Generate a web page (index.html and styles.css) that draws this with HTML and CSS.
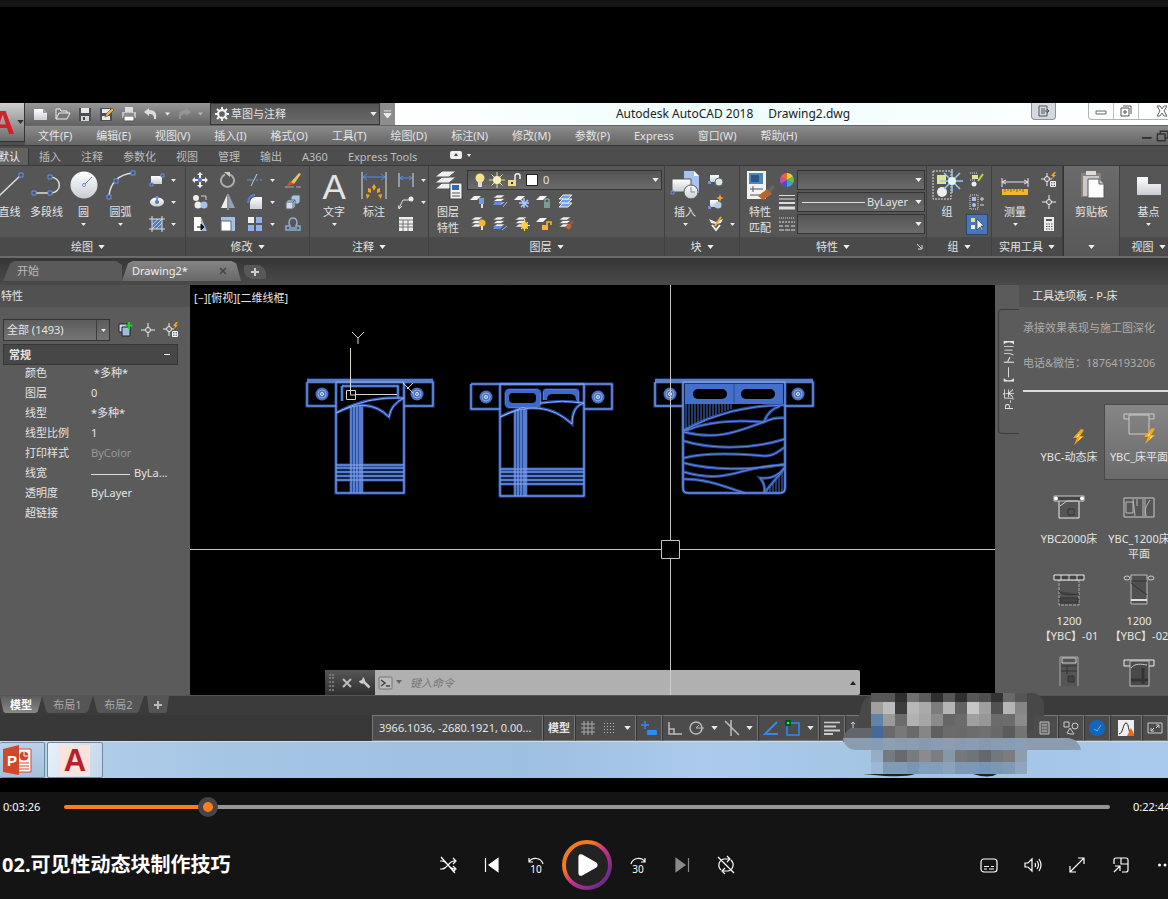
FILE: index.html
```html
<!DOCTYPE html>
<html lang="zh-CN">
<head>
  <meta charset="UTF-8">
  <title>02.可见性动态块制作技巧</title>
  <link rel="stylesheet" href="styles.css">
</head>
<body>

  <!-- shared icon shapes -->
  <svg class="defs" aria-hidden="true">
    <defs>
      <linearGradient id="paper" x1="0" y1="0" x2="0" y2="1"><stop offset="0" stop-color="#fff"/><stop offset="1" stop-color="#c9cdd3"/></linearGradient>
      <linearGradient id="ring" x1="0" y1="0" x2="1" y2="1"><stop offset="0.3" stop-color="#f07a22"/><stop offset="0.52" stop-color="#c9308c"/><stop offset="0.85" stop-color="#6d2c86"/></linearGradient>
      <symbol id="caret" viewBox="0 0 8 5"><path d="M0 0h8L4 5z" fill="#eee"/></symbol>
      <symbol id="stack" viewBox="0 0 16 16"><g fill="#f4f4f4" stroke="#555" stroke-width=".6"><path d="M1 12l4-3h8l-4 3z"/><path d="M1 8.500l4-3h8l-4 3z"/><path d="M1 5l4-3h8L9 5z"/></g></symbol>
      <symbol id="sheet" viewBox="0 0 16 16"><path d="M0 7l4-4h7L7 7z" fill="#f4f4f4"/></symbol>
      <symbol id="lamp" viewBox="-8 -8 16 16"><circle r="6.500" fill="#4a72c4"/><circle r="4" fill="none" stroke="#8fa9de"/><circle r="1.500" fill="#4a72c4" stroke="#e6ecff"/></symbol>
      <symbol id="bolt" viewBox="0 0 14 16"><path d="M9 0L1 9h4l-3 7 10-9H8l4-6z" fill="#f7a51c"/><path d="M8 4L4 8h4l-2 4 4-4H6z" fill="#fff3b0"/></symbol>
      <symbol id="cross" viewBox="0 0 16 16"><path d="M8 1v14M1 8h14" stroke="#eee"/><circle cx="8" cy="8" r="2.500" fill="#666" stroke="#eee"/></symbol>
      <symbol id="crossbolt" viewBox="0 0 16 16"><path d="M6 1v13M0 7h11" stroke="#eee"/><circle cx="6" cy="7" r="2.500" fill="#666" stroke="#eee"/><path d="M13 0l-3 4h2l-1 3 4-4h-2l2-3z" fill="#f7a51c"/><path d="M9.500 9.500h5v5h-5zM12 9.500v5M9.500 12h5" fill="#777" stroke="#fff"/></symbol>
    </defs>
  </svg>

  <div class="letterbox"></div>

  <div class="cad">
    <header class="head">
      <button class="app-menu" aria-label="应用程序"><b>A</b><svg class="caret"><use href="#caret"/></svg></button>
      <div class="head-rows">
        <div class="titlebar">
          <div class="quick">
            <button aria-label="新建"><svg viewBox="0 0 16 16"><path d="M1 3h9l4 4v7H1z" fill="url(#paper)"/><path d="M10 3v4h4z" fill="#999"/></svg></button>
            <button aria-label="打开"><svg viewBox="0 0 16 16"><path d="M1 13V3h4l1 2h6v2M1 13L4 7h11l-3 6z" fill="#777" stroke="#eee"/></svg></button>
            <button aria-label="保存"><svg viewBox="0 0 16 16"><path d="M2 2h12v13H2z" fill="#4b4f55"/><path d="M4 2h8v5H4z" fill="#e8e8e8"/><path d="M4 10h8v5H4z" fill="#cfd6de"/><path d="M6 11h2v3H6z" fill="#444"/></svg></button>
            <button aria-label="另存为"><svg viewBox="0 0 16 16"><path d="M1 2h12v13H1z" fill="#4b4f55"/><path d="M3 3h8v4H3zM3 10h8v4H3z" fill="#e8e8e8"/><path d="M6 11l1-3 6-6 2 2-6 6z" fill="#f0b040" stroke="#333" stroke-width=".5"/></svg></button>
            <button aria-label="打印"><svg viewBox="0 0 16 16"><path d="M4 1h8v5H4z" fill="#ddd"/><path d="M1 6h14v6H1z" fill="#c4c4c4"/><path d="M3 10h10v5H3z" fill="#fff" stroke="#555"/><path d="M3 8h10" stroke="#555"/></svg></button>
            <button aria-label="放弃"><svg viewBox="0 0 16 16"><path d="M6 2L1 6l5 4V8c4 0 5 1 5 5h2c1-6-1-9-7-9z" fill="#ddd"/></svg></button>
            <svg class="caret"><use href="#caret"/></svg>
            <button class="dim" aria-label="重做"><svg viewBox="0 0 16 16"><path d="M10 2l5 4-5 4V8c-4 0-5 1-5 5H3C2 7 4 4 10 4z" fill="#aaa"/></svg></button>
            <svg class="caret dim"><use href="#caret"/></svg>
          </div>
          <label class="combo workspace">
            <svg class="i14" viewBox="0 0 16 16"><circle cx="8" cy="8" r="4.500" fill="none" stroke="#f2f2f2" stroke-width="2.500"/><path d="M8 0v3M8 13v3M0 8h3M13 8h3M2.300 2.300l2 2M11.700 11.700l2 2M13.700 2.300l-2 2M4.300 11.700l-2 2" stroke="#f2f2f2" stroke-width="2.200"/></svg>
            <select aria-label="工作空间"><option>草图与注释</option></select>
            <svg class="caret"><use href="#caret"/></svg>
          </label>
          <button class="quick-more" aria-label="自定义"><svg viewBox="0 0 10 10"><path d="M1 1h8M1 4h8L5 9z" fill="#eee" stroke="#eee"/></svg></button>
          <div class="caption"><span>Autodesk AutoCAD 2018</span><span>Drawing2.dwg</span></div>
          <button class="float-btn" aria-label="停靠"><svg viewBox="0 0 12 12"><path d="M1 1h8v10H1zM3 4h4M3 6h7M3 8h4M9 4l2 2-2 2" fill="none" stroke="#555"/></svg></button>
          <div class="win">
            <button aria-label="最小化"><svg viewBox="0 0 12 12"><path d="M1 6h10v3H1z" fill="#fff" stroke="#666"/></svg></button>
            <button aria-label="还原"><svg viewBox="0 0 12 12"><path d="M3 1h8v8M1 3h8v8H1zM4 6h2v2H4z" fill="none" stroke="#555"/></svg></button>
            <button class="win-close" aria-label="关闭"><svg viewBox="0 0 12 12"><path d="M1 1h3l2 3 2-3h3L8 6l3 5H8L6 8l-2 3H1l3-5z" fill="#fff" stroke="#666"/></svg></button>
          </div>
        </div>
        <nav class="menubar">
          <button>文件(F)</button><button>编辑(E)</button><button>视图(V)</button><button>插入(I)</button><button>格式(O)</button><button>工具(T)</button><button>绘图(D)</button><button>标注(N)</button><button>修改(M)</button><button>参数(P)</button><button>Express</button><button>窗口(W)</button><button>帮助(H)</button>
          <svg class="mdi" viewBox="0 0 28 12"><path d="M1 8h10" stroke="#333" stroke-width="2"/><path d="M20 4V1h8v7h-3M17 4h8v7h-8z" fill="none" stroke="#333" stroke-width="1.500"/></svg>
        </nav>
      </div>
    </header>

    <nav class="ribbon-tabs">
      <button class="on">默认</button><button>插入</button><button>注释</button><button>参数化</button><button>视图</button><button>管理</button><button>输出</button><button>A360</button><button>Express Tools</button>
      <svg class="fold" viewBox="0 0 22 10"><rect y="1" width="12" height="8" rx="2" fill="#eee"/><path d="M4 6h4L6 3z" fill="#444"/><path d="M17 4h4l-2 3z" fill="#eee"/></svg>
    </nav>

    <div class="ribbon">
      <section class="panel draw">
        <div class="tools">
          <button class="big"><svg viewBox="0 0 32 32"><path d="M4 28L27 6" stroke="#ddd" stroke-width="1.500"/><path d="M25 4h4v4h-4z" fill="#456" stroke="#6f8fe8"/></svg><span>直线</span></button>
          <button class="big"><svg viewBox="0 0 32 32"><path d="M4 24h15c13 0 12-16 0-16" fill="none" stroke="#ddd" stroke-width="1.500"/><path d="M1 22h4v4H1zM17 22h4v4h-4zM17 6h4v4h-4z" fill="#456" stroke="#6f8fe8"/></svg><span>多段线</span></button>
          <button class="big"><svg viewBox="0 0 32 32"><circle cx="16" cy="16" r="13.500" fill="url(#paper)"/><path d="M16 16l8-8" stroke="#68a"/><circle cx="16" cy="16" r="1.500" fill="#fff" stroke="#68c"/></svg><span>圆</span><svg class="caret"><use href="#caret"/></svg></button>
          <button class="big"><svg viewBox="0 0 32 32"><path d="M4 27C5 14 14 5 28 4" fill="none" stroke="#ddd" stroke-width="1.500"/><path d="M2 26h4v4H2zM9 10h4v4H9zM26 2h4v4h-4z" fill="#456" stroke="#6f8fe8"/></svg><span>圆弧</span><svg class="caret"><use href="#caret"/></svg></button>
          <div class="mini c2">
            <svg viewBox="0 0 16 16"><path d="M2 4h11v8H2z" fill="url(#paper)"/><path d="M1 11h3v3H1zM12 2h3v3h-3z" fill="#456" stroke="#6f8fe8"/></svg><svg class="caret"><use href="#caret"/></svg>
            <svg viewBox="0 0 16 16"><ellipse cx="8" cy="8" rx="7" ry="4.500" fill="url(#paper)"/><circle cx="8" cy="8" r="2" fill="#57a"/><path d="M8 2v4" stroke="#6f8fe8" stroke-width="2"/></svg><svg class="caret"><use href="#caret"/></svg>
            <svg viewBox="0 0 16 16"><path d="M3 3h10v10H3z" fill="#5379b8"/><path d="M3 9l6-6M3 13L13 3M7 13l6-6" stroke="#bcd"/><path d="M3 0v16M13 0v16M0 3h16M0 13h16" stroke="#ddd"/></svg><svg class="caret"><use href="#caret"/></svg>
          </div>
        </div>
        <h2>绘图 <svg class="caret"><use href="#caret"/></svg></h2>
      </section>

      <section class="panel modify">
        <div class="tools">
          <div class="mini c5">
            <svg viewBox="0 0 16 16"><path d="M8 0l3 3H9v4h4V5l3 3-3 3V9H9v4h2l-3 3-3-3h2V9H3v2L0 8l3-3v2h4V3H5z" fill="#eee"/><path d="M6 6h4v4H6z" fill="#567bd0"/></svg>
            <svg viewBox="0 0 16 16"><path d="M5 2.500a6.500 6.500 0 1 0 5 0" fill="none" stroke="#aaa" stroke-width="2"/><path d="M4 0h6v5z" fill="#ccc"/></svg>
            <svg viewBox="0 0 16 16"><path d="M0 8h6M9 8h2M13 8h2" stroke="#5d7fd0" stroke-width="1.500"/><path d="M4 14L10 2" stroke="#ccc"/></svg><svg class="caret"><use href="#caret"/></svg>
            <svg viewBox="0 0 16 16"><path d="M0 15h16" stroke="#aaa" stroke-dasharray="9 2"/><path d="M6 10l8-9 2 1-7 10z" fill="#e9c260"/><path d="M2 14l3-5 4 3z" fill="#e5521c"/></svg>
            <svg viewBox="0 0 16 16"><circle cx="4" cy="4" r="3" fill="#eee"/><circle cx="6" cy="11" r="3.500" fill="#eee"/><circle cx="12" cy="11" r="3.500" fill="#a9c0ee"/><path d="M9 2h5v4" fill="none" stroke="#ccc"/></svg>
            <svg viewBox="0 0 16 16"><path d="M7 1v13H1z" fill="#eee"/><path d="M9 1v13h6z" fill="#8aa4bb"/><path d="M8 0v16" stroke="#ccc"/></svg>
            <svg viewBox="0 0 16 16"><path d="M3 15V9c0-4 3-6 6-6h6v12z" fill="url(#paper)"/><path d="M1 9c0-5 3-8 7-8" fill="none" stroke="#5d7fd0" stroke-width="2"/></svg><svg class="caret"><use href="#caret"/></svg>
            <svg viewBox="0 0 16 16"><path d="M6 3l2-2h7v7l-2 2H6z" fill="#a9c3dc" stroke="#567"/><path d="M1 8l2-2h7v7l-2 2H1z" fill="#cfdcec" stroke="#567"/><path d="M1 8h7v7M8 8l2-2" fill="none" stroke="#567"/></svg>
            <svg viewBox="0 0 16 16"><path d="M2 1h7v14H2z" fill="#fff"/><path d="M9 1l6 14H9z" fill="#9cb6de"/><path d="M5 11h5M9 8l3 3-3 3z" stroke="#111" fill="#111"/></svg>
            <svg viewBox="0 0 16 16"><path d="M1 1h14v14H1z" fill="#a7bfe0"/><path d="M1 5h10v10H1z" fill="#fff" stroke="#567"/></svg>
            <svg viewBox="0 0 16 16"><path d="M1 1h6v6H1z" fill="#eee"/><path d="M9 1h6v6H9zM1 9h6v6H1zM9 9h6v6H9z" fill="#8fb0ea"/></svg><svg class="caret"><use href="#caret"/></svg>
            <svg viewBox="0 0 16 16"><path d="M1 14h14v-4h-4c2-3 1-8-3-8S3 7 5 10H1zM4 12h8" fill="none" stroke="#8fa9d6" stroke-width="1.500"/></svg>
          </div>
        </div>
        <h2>修改 <svg class="caret"><use href="#caret"/></svg></h2>
      </section>

      <section class="panel note">
        <div class="tools">
          <button class="big text-tool"><b>A</b><span>文字</span><svg class="caret"><use href="#caret"/></svg></button>
          <button class="big"><svg viewBox="0 0 32 32"><path d="M4 3v27M28 3v27" stroke="#ddd"/><path d="M5 8h22M9 5L5 8l4 3M23 5l4 3-4 3" stroke="#4b8ef0" fill="none"/><path d="M14 18l2-3 2 3-2 4zM10 19l3 1v4l-3-1zM22 19l-3 1v4l3-1zM8 25l4 1-3 4zM24 25l-4 1 3 4z" fill="#f2a51c"/></svg><span>标注</span></button>
          <div class="mini c2 wide">
            <svg viewBox="0 0 16 16"><path d="M1 1v14M15 1v14" stroke="#ddd"/><path d="M2 6h12M5 4L2 6l3 2M11 4l3 2-3 2" stroke="#4b8ef0" fill="none"/></svg><svg class="caret"><use href="#caret"/></svg>
            <svg viewBox="0 0 16 16"><path d="M1 14L5 6h6M0 11l1 4 3-3" fill="none" stroke="#ddd"/><circle cx="13" cy="5" r="2.500" fill="#eee"/></svg><svg class="caret"><use href="#caret"/></svg>
            <svg viewBox="0 0 16 16"><path d="M1 1h14v14H1z" fill="#eee"/><path d="M1 4h14M1 8h14M1 11h14M5 4v11M10 4v11" stroke="#777"/></svg>
          </div>
        </div>
        <h2>注释 <svg class="caret"><use href="#caret"/></svg></h2>
      </section>

      <section class="panel layers">
        <div class="tools">
          <button class="big"><svg viewBox="0 0 32 32"><g fill="#f0f0f0" stroke="#555"><path d="M3 20l7-6h14l-7 6z"/><path d="M3 14l7-6h14l-7 6z"/><path d="M3 8l7-6h14l-7 6z"/></g><path d="M18 14h12v16H18z" fill="#f4f4f4" stroke="#444"/><path d="M20 16h7v5h-7z" fill="#3a63b8"/><path d="M20 24h8M20 27h8" stroke="#555"/></svg><span>图层<br>特性</span></button>
          <div class="layer-side">
            <label class="combo">
              <svg viewBox="0 0 16 16"><circle cx="8" cy="6" r="4.500" fill="#f7e08a"/><path d="M6 10h4v5H6z" fill="#ddd"/></svg>
              <svg viewBox="0 0 16 16"><path d="M8 0v16M0 8h16M2.500 2.500l11 11M13.500 2.500l-11 11" stroke="#eadc9a"/><circle cx="8" cy="8" r="4" fill="#f7efb5"/></svg>
              <svg viewBox="0 0 16 16"><path d="M2 8h8v6H2z" fill="#f2d98a"/><path d="M9 8V4c0-3 5-3 5 0v3" fill="none" stroke="#eee" stroke-width="1.500"/><path d="M6 10v2" stroke="#333" stroke-width="2"/></svg>
              <i class="swatch"></i>
              <select aria-label="图层"><option>0</option></select>
              <svg class="caret"><use href="#caret"/></svg>
            </label>
            <div class="mini five">
              <svg viewBox="0 0 16 16"><use href="#sheet"/><path d="M9 5h5v6H9z" fill="#6f9be8"/><path d="M11 11h2v4h-2z" fill="#ddd"/></svg>
              <svg viewBox="0 0 16 16"><use href="#stack"/><path d="M3 9h8l-3 3H1z" fill="#5c8fd8"/><path d="M15 9l-4 5" stroke="#9bd"/></svg>
              <svg viewBox="0 0 16 16"><use href="#sheet"/><path d="M10 5v10M5 10h10M7 7l7 7M14 7l-7 7" stroke="#aac8ff" stroke-width="1.500"/></svg>
              <svg viewBox="0 0 16 16"><use href="#sheet"/><path d="M8 9h6v6H8z" fill="#789d96"/><path d="M9 9V6h4v3" stroke="#9bb" fill="none"/></svg>
              <svg viewBox="0 0 16 16"><g fill="#6fa0e8" stroke="#eee"><path d="M1 14l4-4h9l-4 4z"/><path d="M1 10l4-4h9l-4 4z"/><path d="M1 6l4-4h9l-4 4z"/></g></svg>
              <svg viewBox="0 0 16 16"><use href="#stack"/><circle cx="12" cy="8" r="3.500" fill="#f5b433"/><path d="M11 11h2v4h-2z" fill="#ddd"/></svg>
              <svg viewBox="0 0 16 16"><use href="#stack"/><path d="M3 11h8l-3 3H1z" fill="#5c8fd8"/><path d="M10 15l5-4" stroke="#9bd"/></svg>
              <svg viewBox="0 0 16 16"><use href="#stack"/><path d="M10.500 4v12M5 10.500h11M7 7l7 7M14 7l-7 7" stroke="#ffe66b"/><circle cx="10.500" cy="10.500" r="3.500" fill="#f9d23c"/></svg>
              <svg viewBox="0 0 16 16"><use href="#sheet"/><path d="M6 10h6v5H6z" fill="#f2b632"/><path d="M11 10V7h4v3" stroke="#f2b632" fill="none" stroke-width="1.500"/></svg>
              <svg viewBox="0 0 16 16"><use href="#stack"/><path d="M7 12l3-3 4 2-3 4z" fill="#c7602a"/><path d="M12 10l3-4" stroke="#a54" stroke-width="2"/></svg>
            </div>
          </div>
        </div>
        <h2>图层 <svg class="caret"><use href="#caret"/></svg></h2>
      </section>

      <section class="panel block">
        <div class="tools">
          <button class="big"><svg viewBox="0 0 32 32"><path d="M15 2h10l5 5v17H15z" fill="#a9c3ec"/><path d="M25 2v5h5z" fill="#fff"/><path d="M3 10h19v13H3z" fill="url(#paper)" stroke="#555"/><circle cx="22" cy="23" r="7" fill="url(#paper)" stroke="#555"/><path d="M22 18v5h4" fill="none" stroke="#789"/><path d="M2 22h3v3H2z" fill="#456" stroke="#6f8fe8"/></svg><span>插入</span><svg class="caret"><use href="#caret"/></svg></button>
          <div class="mini c2">
            <svg viewBox="0 0 16 16"><path d="M2 3h9v7H2z" fill="url(#paper)"/><circle cx="11" cy="10" r="4" fill="#dfe6df" stroke="#567"/><path d="M0 9h3v3H0z" fill="#6f8fe8"/></svg><i></i>
            <svg viewBox="0 0 16 16"><path d="M2 6h8v7H2z" fill="url(#paper)"/><circle cx="10" cy="11" r="3.500" fill="#b9cbe8"/><path d="M12 0l1 3 3 1-3 1-1 3-1-3-3-1 3-1z" fill="#f5a52a"/><path d="M0 12h3v3H0z" fill="#6f8fe8"/></svg><i></i>
            <svg viewBox="0 0 16 16"><path d="M1 3l7 3 7-3-2 4-5 1-5-1z" fill="#eee"/><path d="M4 9l4 5 4-5" fill="none" stroke="#eee" stroke-width="2"/><path d="M7 10l6-9" stroke="#f2b035" stroke-width="2"/></svg><svg class="caret"><use href="#caret"/></svg>
          </div>
        </div>
        <h2>块 <svg class="caret"><use href="#caret"/></svg></h2>
      </section>

      <section class="panel props">
        <div class="tools">
          <button class="big"><svg viewBox="0 0 32 32"><path d="M3 2h19v28H3z" fill="#f2f2f2"/><path d="M5 4h14v11H5z" fill="#4f86b8"/><path d="M7 6h8v7H7z" fill="#2c5688"/><path d="M6 20h13M9 17v6M6 26h10" stroke="#555"/><path d="M23 22l5-6 3 2-5 6z" fill="#666"/><path d="M14 27l9-7 5 5-9 6z" fill="#b8672c"/></svg><span>特性<br>匹配</span></button>
          <div class="prop-rows">
            <div><svg class="wheel" viewBox="0 0 16 16"><path d="M8 8L8 1A7 7 0 0 1 14 4.500z" fill="#e8d23c"/><path d="M8 8l6-3.500a7 7 0 0 1 0 7z" fill="#5cc042"/><path d="M8 8l6 3.500A7 7 0 0 1 8 15z" fill="#3aa0d8"/><path d="M8 8v7a7 7 0 0 1-6-3.500z" fill="#4c4fc4"/><path d="M8 8l-6 3.500a7 7 0 0 1 0-7z" fill="#c84fb0"/><path d="M8 8L2 4.500A7 7 0 0 1 8 1z" fill="#f0682c"/></svg><label class="combo"><select aria-label="对象颜色"><option></option></select><svg class="caret"><use href="#caret"/></svg></label></div>
            <div><svg viewBox="0 0 16 16"><path d="M0 1.500h16M0 5h16" stroke="#ddd"/><path d="M0 9h16" stroke="#ddd" stroke-width="2"/><path d="M0 14h16" stroke="#ddd" stroke-width="3"/></svg><label class="combo"><i class="rule"></i><select class="fit" aria-label="线宽"><option>ByLayer</option></select><svg class="caret"><use href="#caret"/></svg></label></div>
            <div><svg viewBox="0 0 16 16"><path d="M0 2h16" stroke="#ddd" stroke-dasharray="1 1"/><path d="M0 6h16" stroke="#ddd" stroke-dasharray="2 1"/><path d="M0 10h16" stroke="#ddd" stroke-dasharray="4 2"/><path d="M0 14h16" stroke="#ddd" stroke-dasharray="5 1"/></svg><label class="combo"><select aria-label="线型"><option></option></select><svg class="caret"><use href="#caret"/></svg></label></div>
          </div>
        </div>
        <h2 class="with-launch"><i></i><span>特性 <svg class="caret"><use href="#caret"/></svg></span><i class="launch"><svg viewBox="0 0 6 6"><path d="M0 0l4 4M5 1v4H1" fill="none" stroke="#ddd"/></svg></i></h2>
      </section>

      <section class="panel group">
        <div class="tools">
          <button class="big"><svg viewBox="0 0 32 32"><path d="M2 2h18v28H2z" fill="none" stroke="#ddd" stroke-dasharray="2 1"/><path d="M6 6h9v9H6z" fill="#dfe39a"/><circle cx="11" cy="23" r="5" fill="#eee"/><path d="M21 0v24M9 12h23M13 4l16 16M29 4L13 20" stroke="#8fcdf5" stroke-width="1.500"/><circle cx="21" cy="12" r="4" fill="#e4f6ff"/></svg><span>组</span></button>
          <div class="mini c1">
            <svg viewBox="0 0 16 16"><path d="M1 1h8M1 8h6" stroke="#ddd" stroke-dasharray="1 1"/><path d="M3 3h6v4H3z" fill="#dfe39a"/><circle cx="5" cy="12" r="2.500" fill="#eee"/><path d="M9 9l5-7" stroke="#c5d34a" stroke-width="2"/></svg>
            <svg viewBox="0 0 16 16"><path d="M1 1h8v14H1z" fill="none" stroke="#ddd" stroke-dasharray="1 1"/><path d="M3 3h4v4H3z" fill="#a9c0ee"/><circle cx="5" cy="11" r="2" fill="#a9c0ee"/><path d="M11 5h4M13 3v4M11 11h4" stroke="#ddd"/></svg>
            <span class="picked"><svg viewBox="0 0 16 16"><path d="M2 2h4v4H2z" fill="#dfe39a"/><path d="M2 9h4v4H2z" fill="#eee"/><path d="M8 3v11l3-3 2 4 1-1-2-4h3z" fill="#eee" stroke="#333" stroke-width=".6"/></svg></span>
          </div>
        </div>
        <h2>组 <svg class="caret"><use href="#caret"/></svg></h2>
      </section>

      <section class="panel util">
        <div class="tools">
          <button class="big"><svg viewBox="0 0 32 32"><path d="M3 9v9M29 9v9M3 13h26M7 11l-4 2 4 2M25 11l4 2-4 2" stroke="#e5e5e5" fill="none"/><path d="M3 20h26v6H3z" fill="#f3b62c"/><path d="M6 20v3M9 20v2M12 20v3M15 20v2M18 20v3M21 20v2M24 20v3" stroke="#8a5f10"/></svg><span>测量</span><svg class="caret"><use href="#caret"/></svg></button>
          <div class="mini c1">
            <svg viewBox="0 0 16 16"><use href="#crossbolt"/></svg>
            <svg viewBox="0 0 16 16"><use href="#cross"/></svg>
            <svg viewBox="0 0 16 16"><path d="M3 1h10v14H3z" fill="#eee"/><path d="M5 3h6v2H5z" fill="#555"/><path d="M5 8h7M5 10.500h7M5 13h7" stroke="#555" stroke-dasharray="1.500 1"/></svg>
          </div>
        </div>
        <h2>实用工具 <svg class="caret"><use href="#caret"/></svg></h2>
      </section>

      <section class="panel clip">
        <div class="tools">
          <button class="big"><svg viewBox="0 0 32 32"><path d="M5 4h20v24H5z" fill="#8b8378"/><path d="M7 7h16v20H7z" fill="#c9c9c9"/><path d="M10 2h10v4H10z" fill="#ddd"/><path d="M12 10h11l5 5v14H12z" fill="#fff" stroke="#555"/><path d="M23 10v5h5" fill="#ccc" stroke="#555"/></svg><span>剪贴板</span></button>
        </div>
        <h2><svg class="caret"><use href="#caret"/></svg></h2>
      </section>

      <section class="panel view">
        <div class="tools">
          <button class="big"><svg viewBox="0 0 32 32"><path d="M4 8h11v7h13v11H4z" fill="url(#paper)"/></svg><span>基点</span><svg class="caret"><use href="#caret"/></svg></button>
        </div>
        <h2>视图 <svg class="caret"><use href="#caret"/></svg></h2>
      </section>
    </div>

    <div class="doc-tabs">
      <button class="doc">开始</button>
      <button class="doc on">Drawing2* <svg viewBox="0 0 8 8"><path d="M1 1l6 6M7 1L1 7" stroke="#444" stroke-width="1.500"/></svg></button>
      <button class="doc-add" aria-label="新图形"><svg viewBox="0 0 8 8"><path d="M4 0v8M0 4h8" stroke="#ccc" stroke-width="2"/></svg></button>
    </div>

    <div class="work">
      <aside class="properties">
        <h3>特性</h3>
        <div class="pick">
          <label class="combo"><select aria-label="选择"><option>全部 (1493)</option></select><span class="drop"><svg class="caret"><use href="#caret"/></svg></span></label>
          <svg viewBox="0 0 16 16"><path d="M2 2h8v8H2z" fill="#c9d6ee" stroke="#222"/><path d="M5 5h8v9H5z" fill="#9ebcdf" stroke="#222"/><path d="M12 0v7M8.500 3.500h7" stroke="#1fce2c" stroke-width="2"/></svg>
          <svg viewBox="0 0 16 16"><use href="#cross"/></svg>
          <svg viewBox="0 0 16 16"><use href="#crossbolt"/></svg>
        </div>
        <button class="fold-head"><span>常规</span><i></i></button>
        <table>
          <tr><th>颜色</th><td>&nbsp;*多种*</td></tr>
          <tr><th>图层</th><td>0</td></tr>
          <tr><th>线型</th><td>*多种*</td></tr>
          <tr><th>线型比例</th><td>1</td></tr>
          <tr><th>打印样式</th><td class="off">ByColor</td></tr>
          <tr><th>线宽</th><td><i class="rule"></i>ByLa...</td></tr>
          <tr><th>透明度</th><td>ByLayer</td></tr>
          <tr><th>超链接</th><td></td></tr>
        </table>
      </aside>

      <main class="viewport">
        <div class="view-label">[−][俯视][二维线框]</div>
        <svg class="drawing">
          <defs>
            <g id="bed-a">
              <path d="M117 97h126v24h-29M146 121h-29V97M117 95h126"/>
              <path d="M146 97h68v111h-68z"/>
              <path d="M152 101h56v12M152 101v15"/>
              <path d="M146 128Q176 111 214 113M146 128Q178 111 199 132Q201 119 214 113"/>
              <path d="M161 122v86M164 121v87M167 121v87M170 121v87M172 122v86"/>
              <path d="M146 180h68M146 183h68M146 187h68M146 191h68M146 195h68"/>
            </g>
            <g id="bed-b">
              <path d="M281 99h141v25h-28M310 124h-29V99"/>
              <path d="M310 99h84v112h-84z"/>
              <rect x="316" y="105" width="34" height="17" rx="3"/>
              <path d="M354 115v-8q0-2 2-2h30q2 0 2 2v10"/>
              <path d="M310 132Q350 111 394 118M310 132Q352 111 382 139Q382 121 394 118"/>
              <path d="M325 126v85M328 125v86M331 125v86M334 124v87M336 124v87"/>
              <path d="M310 184h84M310 187h84M310 191h84M310 195h84M310 199h84"/>
            </g>
            <g id="bed-c">
              <path d="M465 97h158v24h-28M493 121h-28V97M465 95h158"/>
              <path d="M493 97h102v106q0 5-5 5h-92q-5 0-5-5z"/>
            </g>
            <g id="folds">
              <path d="M494 145Q540 120 595 120M494 146Q525 133 574 137M574 137Q578 125 590 121M494 147C530 156 550 145 574 137Q584 132 595 133"/>
              <path d="M494 156C520 164 560 165 595 154M494 173C520 166 560 170 575 171C585 171 590 165 595 162M494 178C520 185 560 186 595 179M494 187C540 200 550 180 595 180M494 194C520 194 540 204 555 208"/>
              <path d="M595 182Q586 195 570 193Q576 200 574 208L594 184"/>
            </g>
            <path id="hatch" d="M496 118v25M499 118v23M502 118v22M505 118v21M508 118v19M511 118v18M514 118v17M517 118v15M520 118v14M523 118v13M526 118v12M529 118v10M532 118v9M535 118v8M538 118v7M541 118v6M577 205v3M580 201v7M583 198v10M586 194v14M589 191v17M592 187v20"/>
          </defs>
          <g class="glow"><use href="#bed-a"/><use href="#bed-b"/><use href="#bed-c"/><use href="#folds"/></g>
          <g class="core"><use href="#bed-a"/><use href="#bed-b"/><use href="#bed-c"/></g>
          <use class="core soft" href="#folds"/>
          <path d="M495 99h98v20h-98z" fill="#4470cc"/>
          <path d="M544 99v19" stroke="#27488e"/>
          <use href="#hatch" stroke="#4674d0"/>
          <path d="M316 105h34v17h-34zM354 105h34v10h-34z" fill="#3d69c8"/>
          <g fill="#000"><rect x="503" y="104" width="34" height="10" rx="5"/><rect x="551" y="104" width="34" height="10" rx="5"/><rect x="319" y="108" width="27" height="10" rx="4"/><path d="M357 115q0-6 5-6h18q6 0 6 6z"/></g>
          <g><use href="#lamp" x="124" y="101" width="16" height="16"/><use href="#lamp" x="219" y="101" width="16" height="16"/><use href="#lamp" x="288" y="104" width="16" height="16"/><use href="#lamp" x="400" y="104" width="16" height="16"/><use href="#lamp" x="472" y="101" width="16" height="16"/><use href="#lamp" x="600" y="101" width="16" height="16"/></g>
          <g fill="none" stroke="#d8d8d0"><path d="M160.500 63v42M165 109.500h42M156.500 105.500h9v9h-9zM160.500 105v5h5M162 47l6 6 6-6M168 53v6M213 98l10 10M223 98l-6 6"/></g>
          <g stroke="#c4c4c4" fill="none"><path d="M480.500 0v255M480.500 274v136M0 264.500h471M490 264.500h1200"/><path d="M471.500 255.500h18v18h-18z"/></g>
        </svg>
        <div class="command">
          <div class="command-grip"><i></i><svg viewBox="0 0 12 12"><path d="M2 2l8 8M10 2l-8 8" stroke="#bbb" stroke-width="2"/></svg><svg viewBox="0 0 12 12"><path d="M5 5l5.500 5.500" stroke="#ccc" stroke-width="2.500"/><path d="M4 0L3 3 0 4c1 4 6 3 6 0 0-2-1-3-2-4z" fill="#ccc"/></svg></div>
          <svg class="prompt" viewBox="0 0 16 16"><rect x="1" y="2" width="13" height="12" rx="1" fill="#bbb" stroke="#777"/><path d="M3 5l4 3-4 3M8 11h4" fill="none" stroke="#444" stroke-width="1.500"/></svg>
          <svg class="tiny" viewBox="0 0 8 5"><path d="M1 0h6L4 4z" fill="#666"/></svg>
          <input type="text" placeholder="键入命令" aria-label="命令">
          <svg class="tiny" viewBox="0 0 8 5"><path d="M1 5h6L4 1z" fill="#222"/></svg>
        </div>
      </main>

      <aside class="palette">
        <button class="side-tab">P-床【一卜川】</button>
        <div class="palette-body">
          <h3>工具选项板 - P-床</h3>
          <p>承接效果表现与施工图深化</p>
          <p>电话&amp;微信：18764193206</p>
          <hr>
          <div class="blocks">
            <button><svg viewBox="0 0 32 32"><use href="#bolt" x="19" y="19" width="14" height="16"/></svg>YBC-动态床</button>
            <button class="on"><svg viewBox="0 0 32 32"><path d="M6 5h20v19H6zM1 4h30v5h-5M1 4v5h5" fill="none" stroke="#ccc"/><use href="#bolt" x="20" y="18" width="14" height="16"/></svg>YBC_床平面</button>
            <button><svg viewBox="0 0 32 32"><path d="M6 6h20v20H6z" fill="#555" stroke="#eee"/><path d="M1 4h30v5H1z" fill="#444" stroke="#ccc"/><circle cx="3" cy="6.500" r="2" fill="#fff"/><circle cx="29" cy="6.500" r="2" fill="#fff"/><path d="M7 14l7-5h11" fill="none" stroke="#ccc"/><path d="M15 17h6v6h-6z" fill="none" stroke="#333"/></svg>YBC2000床</button>
            <button><svg viewBox="0 0 32 32"><path d="M1 6h30v19H1z" fill="#555" stroke="#ccc"/><path d="M3 10h7v11H3zM10 7l2 17M14 7v7M20 7v17M22 7v17M27 8c-5 8-5 8-4 16" fill="none" stroke="#bbb"/></svg>YBC_1200床<br>平面</button>
            <button><svg viewBox="0 0 32 32"><path d="M6 6h20v25H6z" fill="#555" stroke="#aaa" stroke-dasharray="3 1"/><path d="M1 1h30v5H1z" fill="#444" stroke="#eee"/><path d="M8 1v5M16 1v5M24 1v5" stroke="#ddd"/><path d="M6 17c4 5 12 4 20 3M7 24h18v5H7z" fill="#444" stroke="#333"/></svg>1200<br>【YBC】-01</button>
            <button><svg viewBox="0 0 32 32"><path d="M8 1h16v29H8z" fill="#505050" stroke="#bbb"/><ellipse cx="4" cy="4" rx="3" ry="2" fill="none" stroke="#ccc"/><ellipse cx="28" cy="4" rx="3" ry="2" fill="none" stroke="#ccc"/><path d="M8 7h16M8 9l16 12" stroke="#333"/><path d="M8 26h16" stroke="#ddd" stroke-width="2"/></svg>1200<br>【YBC】-02</button>
            <button><svg viewBox="0 0 32 32"><path d="M7 30V1h18v29" fill="#555" stroke="#aaa"/><path d="M9 2h14v5H9z" fill="#555" stroke="#ccc"/><path d="M8 10h16M14 10v8M8 15h16M15 20h6v6h-6z" fill="#444" stroke="#333"/></svg></button>
            <button><svg viewBox="0 0 32 32"><path d="M7 5h19v25H7z" fill="#4a4a4a" stroke="#bbb"/><path d="M1 4h30v6h-5M1 4v6h6" fill="none" stroke="#eee"/><path d="M8 12c4-5 10-4 16-3" fill="none" stroke="#ccc"/><path d="M8 24h17M20 12v16" stroke="#333" stroke-width="3"/></svg></button>
          </div>
        </div>
      </aside>
    </div>

    <div class="layout-tabs">
      <button class="on">模型</button><button>布局1</button><button>布局2</button>
      <button class="layout-add" aria-label="新布局"><svg viewBox="0 0 8 8"><path d="M4 0v8M0 4h8" stroke="#bbb" stroke-width="2"/></svg></button>
    </div>

    <div class="status">
      <output>3966.1036, -2680.1921, 0.00...</output>
      <button class="cell"><b>模型</b></button>
      <div class="cell">
        <svg viewBox="0 0 16 16"><path d="M4 1v14M8 1v14M12 1v14M1 4h14M1 8h14M1 12h14" stroke="#aaa"/></svg>
        <svg viewBox="0 0 16 16"><path d="M2 3.500h12M2 6.500h12M2 9.500h12M2 12.500h12" stroke="#bbb" stroke-dasharray="1 2"/></svg>
        <svg class="caret"><use href="#caret"/></svg>
      </div>
      <div class="cell"><svg viewBox="0 0 16 16"><path d="M4 1v8M0 5h8" stroke="#2e8bf0" stroke-width="1.500"/><rect x="6" y="10" width="10" height="5" rx="1" fill="#2e8bf0"/></svg></div>
      <div class="cell">
        <svg viewBox="0 0 16 16"><path d="M2 2v12h13M2 9h5v5" fill="none" stroke="#bbb" stroke-width="1.500"/></svg>
        <svg viewBox="0 0 16 16"><circle cx="7" cy="8" r="6" fill="none" stroke="#bbb" stroke-width="1.500"/><path d="M7 8h8M10 5L7 8" stroke="#bbb"/></svg>
        <svg class="caret"><use href="#caret"/></svg>
        <svg viewBox="0 0 16 16"><path d="M1 1l14 14M7 0v16" stroke="#bbb" stroke-width="1.500"/></svg>
        <svg class="caret"><use href="#caret"/></svg>
      </div>
      <div class="cell">
        <svg viewBox="0 0 16 16"><path d="M14 2L2 14h13" fill="none" stroke="#2e8bf0" stroke-width="2"/></svg>
        <svg viewBox="0 0 16 16"><path d="M2 3h12v12H2z" fill="none" stroke="#2e8bf0" stroke-width="1.500"/><path d="M0 0h6v6H0z" fill="#053" /><path d="M2 2h2v2H2z" fill="#2f3"/></svg>
        <svg class="caret"><use href="#caret"/></svg>
      </div>
      <div class="cell"><svg viewBox="0 0 16 16"><path d="M0 2.500h16" stroke="#ccc" stroke-width="1.500"/><path d="M0 6.500h12M0 10.500h16M0 14h9" stroke="#ccc" stroke-width="2"/></svg></div>
      <div class="cell spread">
        <svg viewBox="0 0 16 16"><path d="M3 2v12M1 4l2-2 2 2M8 14l4-10 3 3" stroke="#ccc" fill="none"/></svg>
        <svg viewBox="0 0 16 16"><path d="M3 2h9v12H3zM5 5h5M5 8h5M5 11h5" stroke="#bbb" fill="#666"/></svg>
      </div>
      <div class="cell"><svg viewBox="0 0 16 16"><path d="M1 2h5v5H1zM7 14l-3-1 3-5 4 6z" fill="none" stroke="#ccc"/><circle cx="12" cy="6" r="3" fill="none" stroke="#ccc"/></svg></div>
      <div class="cell"><svg viewBox="0 0 16 16"><circle cx="8" cy="8" r="8" fill="#1266c0"/><path d="M5 9l3 2 4-6" fill="none" stroke="#5db0f5"/></svg></div>
      <div class="cell roomy"><svg viewBox="0 0 16 16"><path d="M0 0h16v16H0z" fill="#eee"/><path d="M1 14C5 14 5 3 8 3s2 9 5 10" fill="none" stroke="#222"/><path d="M13 8l4 8H9z" fill="#e96a1e"/></svg></div>
      <div class="cell"><svg viewBox="0 0 16 16"><path d="M1 3h14v10H1z" fill="none" stroke="#ccc"/><path d="M4 11l3-3M4 8v3h3M9 5h3v3M9 8l3-3" fill="none" stroke="#ccc"/></svg></div>
    </div>

    <div class="taskbar">
      <button class="ppt" aria-label="PowerPoint"><svg viewBox="0 0 30 30"><path d="M14 4h15v23H14z" fill="#fff" stroke="#d0472b"/><path d="M17 18h10M17 21h10M17 24h10" stroke="#d0472b"/><circle cx="22" cy="11" r="4.500" fill="#d0472b"/><path d="M22 11V6M22 11h5" stroke="#fff"/><path d="M1 4l16-4v30L1 27z" fill="#d0472b"/><text x="5" y="21">P</text></svg></button>
      <button class="acad" aria-label="AutoCAD"><b>A</b></button>
    </div>

    <svg class="mosaic" id="mosaic" viewBox="0 0 240 86">
      <path d="M20 10q4-9 20-9h150q8 1 11 9v14h-10v14h-4l-8 10H14V30z" fill="#484848"/>
      <path d="M8 36h20v14H0q0-10 8-14z" fill="#62656c"/>
      <path d="M0 46h226q10 2 12 12H14Q2 58 0 46z" fill="#8b9bb0"/>
      <path d="M20 82h52q-8 3-30 2zM130 82h24q-8 5-24 0z" fill="#222"/>
    </svg>
  </div>

  <footer class="player">
    <div class="timeline">
      <span>0:03:26</span>
      <input type="range" min="0" max="1000" value="131" aria-label="进度">
      <span>0:22:44</span>
    </div>
    <div class="controls">
      <h1>02.可见性动态块制作技巧</h1>
      <div class="transport">
        <button aria-label="随机播放"><svg viewBox="0 0 20 20"><path d="M2 6h2c5 0 7 8 12 8h1M2 14h2c5 0 7-8 12-8h1M15 3l3 3-3 3M15 11l3 3-3 3M3 2l14 16"/></svg></button>
        <button aria-label="上一个"><svg viewBox="0 0 20 20"><path d="M3.500 3v14"/><path d="M16 3.500v13L7 10z" fill="#fff"/></svg></button>
        <button aria-label="后退 10 秒"><svg viewBox="0 0 20 20"><path d="M3 3v4h4M3 7c3-5 12-5 14 2"/><text x="10" y="18">10</text></svg></button>
        <button class="play" aria-label="播放"><svg viewBox="0 0 50 50"><circle cx="25" cy="25" r="23" fill="#222" stroke="url(#ring)" stroke-width="4"/><path d="M17 17v16q0 3 3 2l14-8q2-2 0-4l-14-8q-3-1-3 2z" fill="#fff"/></svg></button>
        <button aria-label="前进 30 秒"><svg viewBox="0 0 20 20"><path d="M17 3v4h-4M17 7C14 2 5 2 3 9"/><text x="10" y="18">30</text></svg></button>
        <button class="dim" aria-label="下一个" disabled><svg viewBox="0 0 20 20"><path d="M16.500 3v14"/><path d="M4 3.500v13l9-6.500z" fill="#fff"/></svg></button>
        <button aria-label="循环"><svg viewBox="0 0 20 20"><path d="M5 15c-4-4-2-10 3-11h6M11 1l3 3-3 3M15 5c4 4 2 10-3 11H7M9 13l-3 3 3 3M2 2l16 16"/></svg></button>
      </div>
      <div class="extras">
        <button aria-label="字幕"><svg viewBox="0 0 20 20"><rect x="2" y="4" width="16" height="13" rx="3"/><path d="M5 11.500h5M12 11.500h3M5 14h3M10 14h5"/></svg></button>
        <button aria-label="音量"><svg viewBox="0 0 20 20"><path d="M2 8v4h3l4 4V4L5 8zM12 8q1 2 0 4M14 6q3 4 0 8M16 4q4 6 0 12"/></svg></button>
        <button aria-label="全屏"><svg viewBox="0 0 20 20"><path d="M3 17L17 3M11 3h6v6M3 11v6h6"/></svg></button>
        <button aria-label="迷你播放器"><svg viewBox="0 0 20 20"><path d="M3 9V5q0-2 2-2h10q2 0 2 2v10q0 2-2 2h-4M10 3v6h7M3 17l6-6M4 11h5v5"/></svg></button>
        <button aria-label="更多"><svg viewBox="0 0 20 20"><g fill="#fff" stroke="none"><circle cx="4.500" cy="10" r="1.500"/><circle cx="10" cy="10" r="1.500"/><circle cx="15.500" cy="10" r="1.500"/></g></svg></button>
      </div>
    </div>
  </footer>

  <script>
    // 12px tiles, one string of colours per row
    const rows = [
      "585858 575757 2f2f2f 707070 5b5b5b 2e2e2e 565656 2f2f2f 575757 4f4f4f 333333 6a6a6a 555555",
      "9f9f9f bcbcbc 3d3d3d b8b8b8 aaaaaa 7c7c7c b5b5b5 616161 c6c6c6 a0a0a0 515151 b5b5b5 868686",
      "6283a8 9b9b9b 6c6c6c b2b2b2 a6a6a6 8b8b8b 666666 6b6b6b 9f9f9f 979797 6b6b6b 6c6c6c 8b8b8b",
      "466a97 6a6a6a 787878 6a6a6a 868686 5f5f5f 6b6b6b 6a6a6a 6d6d6d 707070 686868 5b5b5b 747474",
      "869bb5 8c9fb3 8a9cb0 8b9db0 8799ad 8a9cb1 8c9db1 899bb0 8a9cb1 8799b0 899cb2 879cb5 8a9fb7",
      "95adc5 747b80 676a6c 777c81 8b8a8c 7a7e82 8797a6 75797d 6f7478 65696b 73787c 7d7b7d 8d9dad",
      "9bb9d6 809bb5 7f9cb8 7897b5 809fbc 829fba 8aa4bd 7c98b2 7b99b6 7595b5 7b97b2 819ab3 8ea6bf"
    ];
    const mosaic = document.getElementById("mosaic");

    rows.forEach((row, r) => {
      row.split(" ").forEach((color, c) => {
        const tile = document.createElementNS("http://www.w3.org/2000/svg", "rect");
        tile.setAttribute("x", 28 + c * 12);
        tile.setAttribute("y", r === 0 ? 1 : r * 12 - 2);
        tile.setAttribute("width", 12);
        tile.setAttribute("height", r === 0 ? 9 : 12);
        tile.setAttribute("fill", "#" + color);
        mosaic.appendChild(tile);
      });
    });
  </script>

</body>
</html>
```
FILE: styles.css
```css
* {
  box-sizing: border-box;
}

body {
  margin: 0;
  height: 100vh;
  display: flex;
  flex-direction: column;
  overflow: hidden;
  background: #000;
  color: #e4e4e4;
  font-family: "Noto Sans", "Noto Sans CJK SC", sans-serif;
  font-size: 11px;
  line-height: 16px;
}

button, input, select {
  font: inherit;
  color: inherit;
  border: 0;
  padding: 0;
  margin: 0;
  background: none;
}

h1, h2, h3, p, table {
  margin: 0;
  font-size: 11px;
  font-weight: normal;
}

svg {
  width: 16px;
  height: 16px;
  flex: none;
  display: block;
}

.defs {
  position: absolute;
  width: 0;
  height: 0;
}

.caret {
  width: 7px;
  height: 4px;
}

.dim {
  opacity: 0.5;
}

.letterbox {
  flex: 0 0 103px;
  border-top: 7px solid #141414;
}

.cad {
  flex: 1;
  min-height: 0;
  display: flex;
  flex-direction: column;
  position: relative;
  overflow: hidden;
  background: #383838;
}

/* title and menu */
.head {
  display: flex;
  background: #4f4f4f;
}

.app-menu {
  flex: 0 0 25px;
  height: 39px;
  display: flex;
  align-items: center;
  justify-content: flex-end;
  gap: 2px;
  overflow: hidden;
  background: linear-gradient(#d0d0d0, #6a6a6a);
  border-right: 1px solid #333;
  border-bottom: 1px solid #333;
}

.app-menu b {
  font: bold 34px/34px "Liberation Sans", sans-serif;
  color: #cc2229;
}

.app-menu .caret {
  filter: brightness(0.2);
}

.head-rows {
  flex: 1;
  min-width: 0;
}

.titlebar {
  display: flex;
  height: 22px;
  background: linear-gradient(90deg, #fff, #e2fbfd 20%, #fff 30%, #effdfd 60%, #fff);
}

.quick {
  flex: 0 0 185px;
  display: flex;
  align-items: center;
  padding-left: 8px;
  gap: 6px;
  background: linear-gradient(#979797, #636363);
}

.quick .caret {
  width: 5px;
}

.combo {
  display: flex;
  align-items: center;
  height: 20px;
  padding: 0 2px 0 4px;
  gap: 2px;
  border: 1px solid #343434;
  background: linear-gradient(#545454, #6b6b6b);
}

.combo select {
  flex: 1;
  min-width: 0;
  height: 18px;
  appearance: none;
}

.combo select.fit {
  flex: none;
  margin-right: 4px;
}

.workspace {
  flex: 0 0 170px;
  height: 22px;
}

.i14 {
  width: 14px;
  height: 14px;
}

.quick-more {
  flex: 0 0 15px;
  display: grid;
  place-items: center;
  background: #8d8d8d;
}

.quick-more svg {
  width: 9px;
  height: 9px;
}

.caption {
  flex: 1;
  display: flex;
  justify-content: center;
  gap: 15px;
  padding-left: 40px;
  font-size: 12px;
  line-height: 22px;
  color: #222;
}

.float-btn {
  flex: 0 0 25px;
  height: 17px;
  display: grid;
  place-items: center;
  border: 1px solid #8b9298;
  border-top: 0;
  border-radius: 0 0 4px 4px;
  background: #d3d9de;
}

.float-btn svg, .win svg {
  width: 12px;
  height: 12px;
}

.win {
  display: flex;
  height: 17px;
  margin-left: 32px;
  border: 1px solid #aab4bb;
  border-width: 0 0 1px 1px;
  border-radius: 0 0 0 4px;
}

.win button {
  width: 25px;
  display: grid;
  place-items: center;
  border-right: 1px solid #b7c0c6;
}

.win .win-close {
  width: 29px;
  justify-items: end;
  border: 0;
}

.menubar {
  display: flex;
  align-items: center;
  gap: 24px;
  height: 20px;
  padding-left: 13px;
  background: linear-gradient(#8b8b8b, #656565);
  border-top: 1px solid #666;
}

.menubar button {
  white-space: nowrap;
}

.mdi {
  width: 27px;
  height: 12px;
  margin-left: auto;
}

/* ribbon */
.ribbon-tabs {
  display: flex;
  align-items: flex-end;
  height: 20px;
  background: #4d4d4d;
  border-top: 1px solid #383838;
}

.ribbon-tabs button {
  height: 17px;
  padding: 0 10px;
  line-height: 14px;
  color: #bdbdbd;
  white-space: nowrap;
}

.ribbon-tabs button.on {
  width: 29px;
  padding: 0;
  text-indent: -2px;
  text-align: left;
  color: #eee;
  background: #616161;
  border-right: 1px solid #363636;
}

.fold {
  width: 22px;
  height: 10px;
  margin: 0 0 5px 23px;
}

.ribbon {
  display: flex;
  height: 93px;
  margin-left: -9px;
  background: #565656;
  border-top: 1px solid #3a3a3a;
  border-bottom: 2px solid #6b6b6b;
}

.panel {
  flex: none;
  display: flex;
  flex-direction: column;
  border-right: 1px solid #404040;
}

.tools {
  flex: 1;
  display: flex;
  padding-top: 3px;
}

.panel h2 {
  display: flex;
  align-items: center;
  justify-content: center;
  gap: 5px;
  height: 19px;
  background: #4a4a4a;
  white-space: nowrap;
}

.draw { width: 195px; }
.modify { width: 124px; }
.note { width: 119px; }
.layers { width: 236px; }
.block { width: 75px; }
.props { width: 187px; }
.group { width: 65px; }
.util { width: 71px; }
.clip { width: 57px; }
.view { width: 58px; }

.big {
  width: 38px;
  display: flex;
  flex-direction: column;
  align-items: center;
  white-space: nowrap;
  line-height: 16px;
}

.big > svg:first-child {
  width: 32px;
  height: 32px;
  margin-bottom: 3px;
}

.big .caret {
  width: 5px;
  height: 3px;
  margin-top: 3px;
}

.text-tool {
  width: 47px;
}

.text-tool b {
  height: 35px;
  font: 35px/35px "Liberation Sans", sans-serif;
}

.mini {
  display: grid;
  grid-auto-rows: 22px;
  align-items: center;
  justify-items: center;
  align-content: start;
}

.mini .caret {
  width: 5px;
  height: 3px;
}

.c1 { grid-template-columns: 22px; }
.c2 { grid-template-columns: 24px 8px; }
.c2.wide { grid-template-columns: 24px 10px; }
.c5 { grid-template-columns: 28px 27px 28px 6px 36px; }

.draw .big {
  width: 37px;
}

.draw .mini {
  margin-left: 6px;
}

.note .tools {
  padding-left: 2px;
}

.note .wide {
  margin-left: 2px;
}

.layer-side {
  flex: 1;
  padding: 1px 2px 0 0;
}

.layer-side .combo {
  gap: 1px;
}

.swatch {
  width: 12px;
  height: 12px;
  margin: 0 4px 0 3px;
  background: #fff;
  border: 1px solid #222;
}

.five {
  grid-template-columns: repeat(5, 22px);
}

.block .big, .group .big, .props .big {
  margin-left: 1px;
}

.prop-rows {
  flex: 1;
  display: flex;
  flex-direction: column;
  gap: 2px;
  padding: 1px 1px 0 0;
}

.prop-rows div {
  display: flex;
  align-items: center;
  gap: 2px;
}

.prop-rows .combo {
  flex: 1;
  min-width: 0;
}

.rule {
  flex: 1;
  height: 1px;
  background: #ddd;
}

.with-launch > i {
  flex: 1;
}

.with-launch span {
  display: flex;
  align-items: center;
  gap: 5px;
}

.launch svg {
  width: 6px;
  height: 6px;
  margin: 0 3px 0 auto;
}

.picked {
  width: 22px;
  height: 21px;
  display: grid;
  place-items: center;
  background: #4a76b8;
  border: 1px solid #274775;
}

.util .big {
  width: 46px;
}

.clip {
  background: linear-gradient(#6b6b6b, #585858);
  border-left: 1px solid #333;
}

.clip h2 {
  background: none;
}

.clip .big, .view .big {
  width: 100%;
}

/* drawing tabs */
.doc-tabs {
  display: flex;
  align-items: flex-start;
  height: 27px;
  padding: 3px 0 0 3px;
  background: linear-gradient(#363636, #4a4a4a);
}

.doc {
  flex: 0 0 119px;
  height: 20px;
  padding-left: 14px;
  text-align: left;
  color: #bbb;
  background: #5a5a5a;
  clip-path: polygon(0 100%, 6% 12%, 10% 0, 95% 0, 100% 20%, 100% 100%);
}

.doc.on {
  display: flex;
  align-items: center;
  padding: 0 14px 0 10px;
  justify-content: space-between;
  color: #eee;
  background: linear-gradient(#858585, #686868);
  clip-path: polygon(0 100%, 5% 12%, 9% 0, 92% 0, 96% 12%, 100% 100%);
}

.doc svg, .doc-add svg, .layout-add svg {
  width: 8px;
  height: 8px;
}

.doc-add {
  width: 22px;
  height: 14px;
  margin: 4px 0 0 3px;
  display: grid;
  place-items: center;
  background: #585858;
  border-radius: 2px 9px 2px 9px;
}

/* work area */
.work {
  flex: 1;
  min-height: 0;
  display: flex;
}

.properties {
  flex: 0 0 190px;
  background: #5b5b5b;
}

.properties h3 {
  height: 22px;
  padding-left: 1px;
  line-height: 22px;
  background: #515151;
}

.pick {
  display: flex;
  align-items: center;
  gap: 7px;
  margin: 12px 0 0 3px;
}

.pick .combo {
  width: 107px;
  height: 22px;
  padding: 0 0 0 3px;
  background: linear-gradient(#5c5c5c, #747474);
}

.drop {
  width: 13px;
  height: 20px;
  display: grid;
  place-items: center;
  border-left: 1px solid #3d3d3d;
}

.drop .caret {
  width: 5px;
  height: 3px;
}

.fold-head {
  display: flex;
  align-items: center;
  justify-content: space-between;
  width: 175px;
  height: 21px;
  margin: 3px 0 0 3px;
  padding: 0 7px 0 5px;
  font-weight: bold;
  background: #474747;
  border: 1px solid #373737;
}

.fold-head i {
  width: 6px;
  height: 1px;
  background: #fff;
}

.properties table {
  width: 160px;
  margin: -2px 0 0 25px;
  border-collapse: collapse;
}

.properties tr {
  height: 20px;
}

.properties th, .properties td {
  padding: 0;
  text-align: left;
  font-weight: normal;
  line-height: 20px;
}

.properties th {
  width: 66px;
}

.properties td .rule {
  display: inline-block;
  width: 39px;
  margin-right: 4px;
  vertical-align: middle;
}

.off {
  color: #999;
}

.viewport {
  flex: 1;
  min-width: 0;
  position: relative;
  overflow: hidden;
  background: #000;
}

.view-label {
  position: absolute;
  top: 5px;
  left: 4px;
}

.drawing {
  width: 100%;
  height: 100%;
}

.glow {
  fill: none;
  stroke: #2f62d0;
  stroke-width: 3;
  opacity: 0.8;
}

.core {
  fill: none;
  stroke: #8eabec;
  stroke-width: 1;
}

.core.soft {
  stroke: #6c88c8;
}

.command {
  position: absolute;
  left: 135px;
  right: 135px;
  bottom: 0;
  height: 25px;
  display: flex;
  align-items: center;
  gap: 3px;
  padding-right: 3px;
  background: rgba(205, 205, 205, 0.86);
  border-radius: 2px;
}

.command-grip {
  flex: 0 0 50px;
  height: 25px;
  display: flex;
  align-items: center;
  justify-content: space-between;
  padding: 0 4px;
  background: linear-gradient(#555, #303030);
}

.command-grip i {
  width: 5px;
  height: 17px;
  border: 2px dotted #777;
  border-width: 0 2px;
}

.command-grip svg {
  width: 12px;
  height: 12px;
}

.command input {
  flex: 1;
  min-width: 0;
  margin-left: 4px;
  font-style: italic;
}

.command input::placeholder {
  color: #777;
}

.command .prompt {
  margin-right: -2px;
}

.tiny {
  width: 8px;
  height: 5px;
}

.palette {
  flex: 0 0 173px;
  display: flex;
  overflow: hidden;
  background: #5b5b5b;
}

.side-tab {
  flex: 0 0 21px;
  height: 125px;
  margin: 24px 0 0 3px;
  writing-mode: vertical-rl;
  text-orientation: sideways;
  transform: rotate(180deg);
  border: 1px solid #3c3c3c;
  border-left: 0;
  border-radius: 0 4px 4px 0;
  white-space: nowrap;
}

.palette-body {
  flex: 1;
  min-width: 0;
}

.palette h3 {
  height: 22px;
  padding-left: 13px;
  line-height: 22px;
  background: #515151;
}

.palette p {
  height: 35px;
  padding-left: 4px;
  line-height: 42px;
  color: #adadad;
  white-space: nowrap;
}

.palette hr {
  margin: 13px 0 12px 4px;
  border: 0;
  border-top: 2px solid #ddd;
}

.blocks {
  display: grid;
  grid-template-columns: 70px 70px;
  gap: 6px 0;
  padding-left: 15px;
}

.blocks button {
  display: flex;
  flex-direction: column;
  align-items: center;
  min-height: 76px;
  padding-top: 6px;
  line-height: 15px;
  white-space: nowrap;
}

.blocks button.on {
  background: linear-gradient(#868686, #6a6a6a);
  box-shadow: inset 0 0 0 1px #484848;
}

.blocks svg {
  width: 32px;
  height: 32px;
  margin-bottom: 7px;
  overflow: visible;
}

/* bottom bars */
.layout-tabs {
  display: flex;
  height: 20px;
  background: #3b3b3b;
  border-top: 1px solid #555;
}

.layout-tabs button {
  width: 42px;
  height: 17px;
  color: #aaa;
  background: #555;
  clip-path: polygon(0 0, 100% 0, 90% 90%, 85% 100%, 12% 100%, 8% 90%);
}

.layout-tabs button + button {
  width: 51px;
}

.layout-tabs .on {
  color: #fff;
  font-weight: bold;
  background: linear-gradient(#5c5c5c, #888);
}

.layout-tabs button.layout-add {
  width: 22px;
  margin-left: 3px;
  display: grid;
  place-items: center;
}

.status {
  display: flex;
  justify-content: flex-end;
  height: 26px;
  background: #383838;
  white-space: nowrap;
}

.status output {
  width: 171px;
  padding-left: 6px;
  line-height: 24px;
  background: #4c4c4c;
  border: 1px solid #777;
}

.cell {
  display: flex;
  align-items: center;
  gap: 6px;
  padding: 0 4px;
  background: #4c4c4c;
  border: 1px solid #777;
  border-left-color: #333;
}

.spread {
  width: 213px;
  justify-content: space-between;
}

.roomy {
  padding: 0 7px;
}

.taskbar {
  display: flex;
  gap: 2px;
  height: 37px;
  background: linear-gradient(90deg, #b7d2ec, #a5c5e5 20%, #9dbfe0 45%, #abcaec 60%, #a2c3e2 80%, #a9caec);
  border-top: 1px solid #cfdcea;
}

.taskbar button {
  width: 56px;
  display: grid;
  place-items: center;
  border: 1px solid #71899f;
  border-radius: 2px;
  background: linear-gradient(110deg, #e9f1fa, #c4d6ea);
}

.taskbar .ppt {
  width: 45px;
  justify-items: start;
  padding-left: 2px;
  border-left: 0;
  background: linear-gradient(#bcd3ea, #a3c0dc);
}

.ppt svg {
  width: 30px;
  height: 30px;
}

.ppt text {
  font: bold 15px "Liberation Sans", sans-serif;
  fill: #fff;
}

.acad b {
  width: 30px;
  font: bold 31px/31px "Liberation Sans", sans-serif;
  color: #b91f2a;
  background: #f9e3dc;
}

.mosaic {
  position: absolute;
  right: 85px;
  bottom: 0;
  width: 240px;
  height: 86px;
}

/* player */
.player {
  flex: 0 0 121px;
  margin-right: -6px;
  border-top: 14px solid #000;
  background: #141414;
  color: #fff;
}

.timeline {
  display: flex;
  align-items: center;
  height: 30px;
  padding-left: 3px;
}

.timeline span {
  flex: 0 0 41px;
}

.timeline input {
  flex: 1;
  height: 20px;
  margin: 0 23px 0 20px;
  appearance: none;
}

.timeline input::-webkit-slider-runnable-track {
  height: 4px;
  border-radius: 2px;
  background: linear-gradient(90deg, #ff7d1f 14%, #979595 14%);
}

.timeline input::-webkit-slider-thumb {
  appearance: none;
  width: 20px;
  height: 20px;
  margin-top: -8px;
  border: 5px solid #454545;
  border-radius: 50%;
  background: #ff7d1f;
}

.controls {
  display: grid;
  grid-template-columns: 1fr auto 1fr;
  align-items: center;
  height: 76px;
  padding-top: 9px;
}

.controls h1 {
  padding-left: 2px;
  font-size: 20px;
  font-weight: bold;
  line-height: 28px;
}

.transport, .extras {
  display: flex;
  align-items: center;
}

.extras {
  justify-content: flex-end;
  margin-right: -13px;
}

.controls button {
  width: 44px;
  height: 44px;
  display: grid;
  place-items: center;
}

.controls button.play {
  width: 58px;
  height: 50px;
}

.controls svg {
  width: 20px;
  height: 20px;
  fill: none;
  stroke: #fff;
  stroke-width: 1.2;
}

.controls .play svg {
  width: 50px;
  height: 50px;
}

.controls text {
  font: 10px "Noto Sans", sans-serif;
  text-anchor: middle;
  fill: #fff;
  stroke: none;
}
```
